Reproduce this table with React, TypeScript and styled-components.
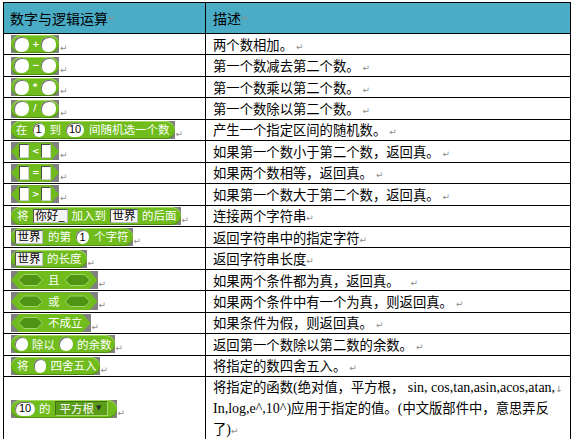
import React from "react";
import styled, { createGlobalStyle } from "styled-components";

const GlobalStyle = createGlobalStyle`
  html, body {
    margin: 0;
    padding: 0;
    background: #fff;
    overflow: hidden;
  }
  body {
    font-family: "Noto Sans CJK SC", "Liberation Sans", sans-serif;
    color: #000;
  }
`;

const GREEN = "#6fbc1c";

const Table = styled.div`
  margin: 2px 0 0 3px;
  width: 568px;
  box-sizing: border-box;
  display: grid;
  grid-template-columns: 202px 365px;
  border-top: 1px solid #000;
  border-left: 1px solid #000;
`;

const Cell = styled.div<{ $tall?: boolean }>`
  box-sizing: border-box;
  height: ${(p) => (p.$tall ? "64px" : "21.44px")};
  border-right: 1px solid #000;
  border-bottom: 1px solid #000;
  padding-left: 7px;
  display: flex;
  align-items: center;
  white-space: nowrap;
`;

const HeadCell = styled(Cell)<{ $first?: boolean }>`
  height: 31px;
  background: #4bacc6;
  font-size: 14px;
  padding-left: ${(p) => (p.$first ? "6px" : "7px")};
`;

const DescCell = styled(Cell)`
  font-size: 13.33px;
  align-items: ${(p) => (p.$tall ? "flex-start" : "center")};
  line-height: ${(p) => (p.$tall ? "20px" : "normal")};
`;

const Lines = styled.div`
  display: flex;
  flex-direction: column;
`;

const Latin = styled.span`
  font-family: "Liberation Serif", serif;
  font-size: 14px;
`;

const Mark = styled.span<{ $gap?: number }>`
  font-family: "DejaVu Sans", sans-serif;
  font-size: 9px;
  line-height: 1;
  color: #8c8c8c;
  margin-left: ${(p) => p.$gap ?? 0}px;
`;

const BlockLine = styled.span`
  display: inline-flex;
  align-items: flex-end;
`;

const Backdrop = styled.span`
  display: inline-flex;
  background: #808080;
`;

const Reporter = styled.span<{ $gap?: number; $pl?: number; $pr?: number }>`
  display: inline-flex;
  align-items: center;
  gap: ${(p) => p.$gap ?? 4}px;
  height: 18px;
  box-sizing: border-box;
  padding: 0 ${(p) => p.$pr ?? 4}px 0 ${(p) => p.$pl ?? 4}px;
  border-radius: 9px;
  background: ${GREEN};
  box-shadow: inset 0 1px 0 #a3da5e, inset 0 -1px 0 #4d8d0f;
  color: #fff;
  font-size: 11.5px;
  line-height: 1;
`;

const Predicate = styled.span<{ $gap?: number; $pl?: number; $pr?: number }>`
  display: inline-flex;
  align-items: center;
  gap: ${(p) => p.$gap ?? 4}px;
  height: 18px;
  box-sizing: border-box;
  padding: 0 ${(p) => p.$pr ?? 8}px 0 ${(p) => p.$pl ?? 8}px;
  background: ${GREEN};
  clip-path: polygon(8px 0, calc(100% - 8px) 0, 100% 50%, calc(100% - 8px) 100%, 8px 100%, 0 50%);
  color: #fff;
  font-size: 11.5px;
  line-height: 1;
`;

const Sign = styled.span`
  width: 6px;
  text-align: center;
  font-family: "DejaVu Sans", sans-serif;
  font-size: 9px;
  font-weight: bold;
  color: #fff;
`;

const NumSlot = styled.span<{ $w?: number; $h?: number }>`
  display: inline-flex;
  align-items: center;
  justify-content: center;
  box-sizing: border-box;
  width: ${(p) => p.$w ?? 12}px;
  height: ${(p) => p.$h ?? 14}px;
  border-radius: 7px;
  background: #fff;
  box-shadow: inset 1px 1px 0 #707070;
  color: #000;
  font-family: "Liberation Sans", sans-serif;
  font-size: 11px;
`;

const BoxSlot = styled.span`
  width: 10px;
  height: 14px;
  box-sizing: border-box;
  background: #fff;
  border: 1px solid #4a4a4a;
  border-right-color: #cfcfcf;
  border-bottom-color: #cfcfcf;
`;

const TextSlot = styled.span<{ $w: number }>`
  display: inline-flex;
  align-items: center;
  justify-content: center;
  box-sizing: border-box;
  width: ${(p) => p.$w}px;
  height: 14px;
  background: #f3f3f3;
  border: 1px solid #505050;
  border-right-color: #bdbdbd;
  border-bottom-color: #bdbdbd;
  color: #000;
  font-size: 11.5px;
`;

const BoolSlot = styled.span<{ $w?: number }>`
  display: inline-flex;
  width: ${(p) => p.$w ?? 25}px;
  height: 12px;
  padding: 1px;
  box-sizing: border-box;
  background: #9fd667;
  clip-path: polygon(6px 0, calc(100% - 6px) 0, 100% 50%, calc(100% - 6px) 100%, 6px 100%, 0 50%);

  &::after {
    content: "";
    flex: 1;
    background: #4f9513;
    clip-path: polygon(5px 0, calc(100% - 5px) 0, 100% 50%, calc(100% - 5px) 100%, 5px 100%, 0 50%);
  }
`;

const Dropdown = styled.span`
  display: inline-flex;
  align-items: center;
  gap: 2px;
  height: 15px;
  box-sizing: border-box;
  width: 53px;
  padding: 0 2px 0 4px;
  background: #5a9d19;
  border: 1px solid #a8d870;
  border-top-color: #3f7410;
  border-left-color: #3f7410;
  color: #fff;
`;

const Caret = styled.span`
  font-family: "DejaVu Sans", sans-serif;
  font-size: 7px;
  color: #2c2c2c;
`;

const Block = ({ children }: { children: React.ReactNode }) => (
  <BlockLine>
    <Backdrop>{children}</Backdrop>
    <Mark $gap={1}>↵</Mark>
  </BlockLine>
);

const Arith = ({ sign }: { sign: string }) => (
  <Block>
    <Reporter $gap={3} $pl={3} $pr={3}>
      <NumSlot $w={15} $h={15} />
      <Sign>{sign}</Sign>
      <NumSlot $w={15} $h={15} />
    </Reporter>
  </Block>
);

const Compare = ({ sign }: { sign: string }) => (
  <Block>
    <Predicate $gap={3}>
      <BoxSlot />
      <Sign>{sign}</Sign>
      <BoxSlot />
    </Predicate>
  </Block>
);

const Logic = ({ word }: { word: string }) => (
  <Block>
    <Predicate $gap={5} $pl={7} $pr={7}>
      <BoolSlot />
      <span>{word}</span>
      <BoolSlot $w={26} />
    </Predicate>
  </Block>
);

interface IRow {
  block: React.ReactNode;
  desc: React.ReactNode;
}

const rows: IRow[] = [
  { block: <Arith sign="+" />, desc: <>两个数相加。 <Mark>↵</Mark></> },
  { block: <Arith sign="−" />, desc: <>第一个数减去第二个数。 <Mark>↵</Mark></> },
  { block: <Arith sign="*" />, desc: <>第一个数乘以第二个数。 <Mark>↵</Mark></> },
  { block: <Arith sign="/" />, desc: <>第一个数除以第二个数。 <Mark>↵</Mark></> },
  {
    block: (
      <Block>
        <Reporter $gap={5} $pl={5} $pr={5}>
          <span>在</span>
          <NumSlot>1</NumSlot>
          <span>到</span>
          <NumSlot $w={18}>10</NumSlot>
          <span>间随机选一个数</span>
        </Reporter>
      </Block>
    ),
    desc: <>产生一个指定区间的随机数。 <Mark>↵</Mark></>,
  },
  { block: <Compare sign="<" />, desc: <>如果第一个数小于第二个数，返回真。 <Mark>↵</Mark></> },
  { block: <Compare sign="=" />, desc: <>如果两个数相等，返回真。 <Mark>↵</Mark></> },
  { block: <Compare sign=">" />, desc: <>如果第一个数大于第二个数，返回真。 <Mark>↵</Mark></> },
  {
    block: (
      <Block>
        <Reporter $gap={4} $pl={6} $pr={4}>
          <span>将</span>
          <TextSlot $w={35}>你好_</TextSlot>
          <span>加入到</span>
          <TextSlot $w={28}>世界</TextSlot>
          <span>的后面</span>
        </Reporter>
      </Block>
    ),
    desc: <>连接两个字符串<Mark>↵</Mark></>,
  },
  {
    block: (
      <Block>
        <Reporter $gap={5} $pl={4} $pr={4}>
          <TextSlot $w={28}>世界</TextSlot>
          <span>的第</span>
          <NumSlot $w={13}>1</NumSlot>
          <span>个字符</span>
        </Reporter>
      </Block>
    ),
    desc: <>返回字符串中的指定字符<Mark>↵</Mark></>,
  },
  {
    block: (
      <Block>
        <Reporter $gap={4} $pl={4} $pr={5}>
          <TextSlot $w={28}>世界</TextSlot>
          <span>的长度</span>
        </Reporter>
      </Block>
    ),
    desc: <>返回字符串长度<Mark>↵</Mark></>,
  },
  { block: <Logic word="且" />, desc: <>如果两个条件都为真，返回真。 <Mark $gap={8}>↵</Mark></> },
  { block: <Logic word="或" />, desc: <>如果两个条件中有一个为真，则返回真。 <Mark>↵</Mark></> },
  {
    block: (
      <Block>
        <Predicate $gap={5} $pl={7} $pr={8}>
          <BoolSlot />
          <span>不成立</span>
        </Predicate>
      </Block>
    ),
    desc: <>如果条件为假，则返回真。 <Mark>↵</Mark></>,
  },
  {
    block: (
      <Block>
        <Reporter $gap={4} $pl={4} $pr={3}>
          <NumSlot $w={13}></NumSlot>
          <span>除以</span>
          <NumSlot $w={14}></NumSlot>
          <span>的余数</span>
        </Reporter>
      </Block>
    ),
    desc: <>返回第一个数除以第二数的余数。 <Mark>↵</Mark></>,
  },
  {
    block: (
      <Block>
        <Reporter $gap={5} $pl={6} $pr={3}>
          <span>将</span>
          <NumSlot $w={12}></NumSlot>
          <span>四舍五入</span>
        </Reporter>
      </Block>
    ),
    desc: <>将指定的数四舍五入。 <Mark>↵</Mark></>,
  },
];

const lastDesc = (
  <Lines>
    <span>
      将指定的函数<Latin>(</Latin>绝对值，平方根，<Latin> sin, cos,tan,asin,acos,atan,</Latin>
      <Mark>↓</Mark>
    </span>
    <span>
      <Latin>In,log,e^,10^)</Latin>应用于指定的值。<Latin>(</Latin>中文版部件中，意思弄反
    </span>
    <span>
      了<Latin>)</Latin>
      <Mark>↵</Mark>
    </span>
  </Lines>
);

const lastBlock = (
  <Block>
    <Reporter $gap={4} $pl={4} $pr={9}>
      <NumSlot $w={20}>10</NumSlot>
      <span>的</span>
      <Dropdown>
        <span>平方根</span>
        <Caret>▼</Caret>
      </Dropdown>
    </Reporter>
  </Block>
);

const App: React.FunctionComponent = () => {
  return (
    <>
      <GlobalStyle />
      <Table>
        <HeadCell $first>
          数字与逻辑运算<Mark>↵</Mark>
        </HeadCell>
        <HeadCell>
          描述<Mark>↵</Mark>
        </HeadCell>
        {rows.map((row, i) => (
          <React.Fragment key={i}>
            <Cell>{row.block}</Cell>
            <DescCell>
              <span>{row.desc}</span>
            </DescCell>
          </React.Fragment>
        ))}
        <Cell $tall>{lastBlock}</Cell>
        <DescCell $tall>{lastDesc}</DescCell>
      </Table>
    </>
  );
};

export default App;
